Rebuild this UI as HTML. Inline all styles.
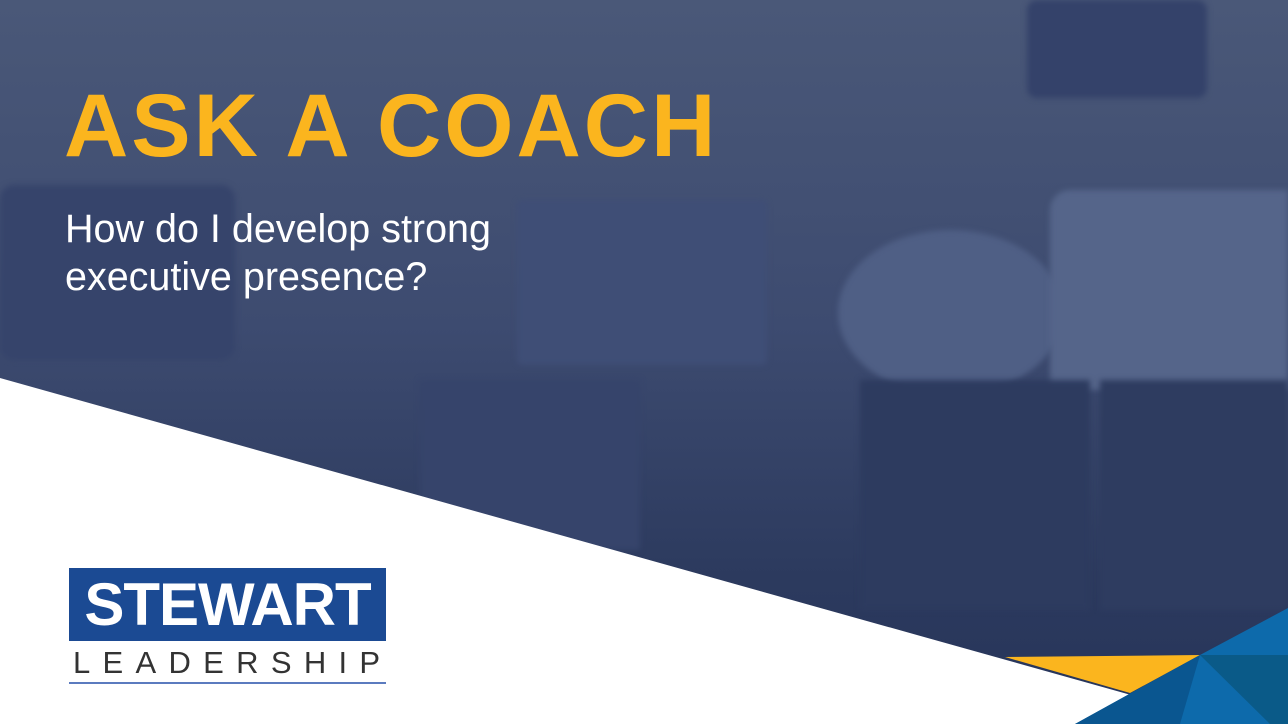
<!DOCTYPE html>
<html><head><meta charset="utf-8"><style>
html,body{margin:0;padding:0}
body{width:1288px;height:724px;position:relative;overflow:hidden;background:#3b4a6f;font-family:"Liberation Sans",sans-serif}
.bg{position:absolute;inset:0;background:linear-gradient(180deg,#4a5878 0%,#3d4b70 45%,#2c3a5e 80%,#26345a 100%)}
.sh{position:absolute;filter:blur(3px)}
h1{position:absolute;left:64px;top:74px;margin:0;font-size:89px;font-weight:bold;color:#fbb51e;letter-spacing:3px;white-space:nowrap}
.sub{position:absolute;left:65px;top:205px;color:#fff;font-size:39.5px;line-height:48px}
</style></head><body>
<div class="bg"></div>
<div class="sh" style="left:0;top:185px;width:235px;height:175px;border-radius:14px;background:#36446b"></div>
<div class="sh" style="left:517px;top:200px;width:250px;height:165px;border-radius:6px;background:#3f4e76"></div>
<div class="sh" style="left:838px;top:230px;width:225px;height:165px;border-radius:50%;background:#4f5f85"></div>
<div class="sh" style="left:1027px;top:0;width:180px;height:98px;border-radius:10px;background:#34426a"></div>
<div class="sh" style="left:1050px;top:190px;width:238px;height:200px;background:#55658a;border-radius:20px 0 0 0"></div>
<div class="sh" style="left:1100px;top:380px;width:188px;height:230px;background:#2e3c60"></div>
<div class="sh" style="left:860px;top:380px;width:230px;height:230px;background:#2d3b5f"></div>
<div class="sh" style="left:420px;top:380px;width:220px;height:170px;background:#36446b"></div>
<svg width="1288" height="724" style="position:absolute;left:0;top:0">
<polygon points="0,378 1288,739 1288,724 0,724" fill="#fff"/>
<polygon points="1005,657 1200,655 1130,693" fill="#fbb51e"/>
<polygon points="1288,608 1288,724 1075,724 1200,655" fill="#0d6aab"/>
<polygon points="1200,655 1288,655 1288,724 1270,724" fill="#0a5a88"/>
<polygon points="1200,655 1180,724 1075,724" fill="#0a5690"/>
</svg>
<h1>ASK A COACH</h1>
<div class="sub">How do I develop strong<br>executive presence?</div>
<div style="position:absolute;left:69px;top:568px;width:317px;height:73px;background:#1b4a93;color:#fff;font-weight:bold;font-size:60px;line-height:73px;text-align:center;letter-spacing:-1px">STEWART</div>
<div style="position:absolute;left:73px;top:645px;width:330px;color:#333;font-size:31px;letter-spacing:12.3px;white-space:nowrap">LEADERSHIP</div>
<div style="position:absolute;left:69px;top:682px;width:317px;height:2px;background:#5b7bbf"></div>
</body></html>
